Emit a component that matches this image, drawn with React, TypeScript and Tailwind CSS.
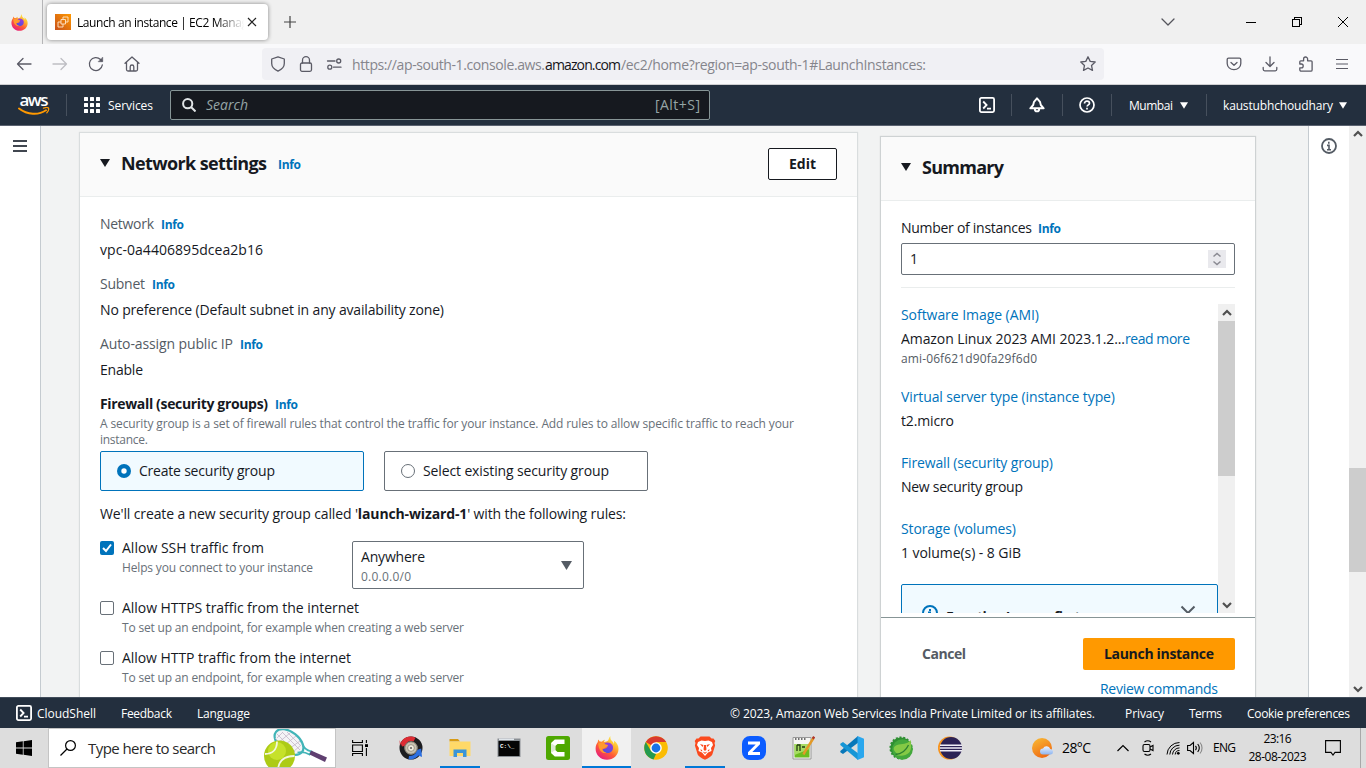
import React, { useLayoutEffect, useRef, useState } from "react";

/* Text run that tracks its letters so that it fills a given width. */
function Fit({ w, className = "", children }: { w: number; className?: string; children: React.ReactNode }) {
  const ref = useRef<HTMLSpanElement>(null);
  const [spacing, setSpacing] = useState(0);
  useLayoutEffect(() => {
    const el = ref.current;
    if (!el) return;
    el.style.letterSpacing = "0px";
    const n = Math.max((el.textContent || "").length - 1, 1);
    setSpacing((w - el.getBoundingClientRect().width) / n);
  }, [w]);
  return (
    <span ref={ref} className={`inline-block shrink-0 whitespace-pre ${className}`} style={{ letterSpacing: `${spacing}px`, marginRight: `${-spacing}px` }}>
      {children}
    </span>
  );
}

const Info = ({ className = "mt-px" }: { className?: string }) => (
  <Fit w={23} className={`text-[12px] font-bold text-[#0073bb] ${className}`}>Info</Fit>
);

const Tri = ({ className = "" }: { className?: string }) => (
  <svg viewBox="0 0 10 8" className={`shrink-0 ${className}`} fill="currentColor"><path d="M0 0h10L5 8z" /></svg>
);

const line = { fill: "none", stroke: "currentColor", strokeWidth: 1.3, strokeLinecap: "round" as const, strokeLinejoin: "round" as const };

function Firefox({ className = "" }: { className?: string }) {
  return (
    <svg viewBox="0 0 24 24" className={className}>
      <defs>
        <linearGradient id="fxBody" x1="0.85" y1="0.05" x2="0.2" y2="1">
          <stop offset="0" stopColor="#fff44f" /><stop offset="0.3" stopColor="#ffb52e" /><stop offset="0.6" stopColor="#ff5a36" /><stop offset="1" stopColor="#e31587" />
        </linearGradient>
        <linearGradient id="fxGlobe" x1="0.7" y1="0" x2="0.3" y2="1">
          <stop offset="0" stopColor="#a138d8" /><stop offset="1" stopColor="#4a52e0" />
        </linearGradient>
      </defs>
      <path fill="url(#fxBody)" d="M15.5.3c-.6 2.4.4 3.6 1.700 5 1.200 1.200 1.500 1.800 1.600 2.900.500-1 .4-2.700 0-3.600 3.300 2.300 4.700 5.200 4.700 8.500C23.500 19.300 18.400 23.800 12 23.800S.6 18.800.6 12.700c0-2.800.8-4.900 2.200-6.800l.3-2.300c.7.7 1.300 1.200 1.700 2 .7-.1 1.500 0 2.100.2C7.600 4.800 8.900 3.900 10 3.800c-.7.8-1 1.500-1.100 2.300 2-.4 3.200-.7 4.300-1.600C13.900 3 14 1.300 15.500.3z" />
      <path fill="url(#fxGlobe)" d="M9.300 7.300c3-1.700 6.900-.7 8.200 2 1.500 3-.1 7.500-4.300 7.700-3.500.2-5.700-2.200-5.400-4.600 1 .6 2 .4 3-.2.600-.4 1.400-.7 1.900-1.400-1.100-.4-2.100.1-2.700-.3-.600-.4-.3-1.500.700-2.300z" />
      <path fill="#ff9a2e" d="M3.200 7.500c1.700-1 3.500-1 5.700-.7-.4 1 .1 1.500 1.600 1.700 1 .1 2.300.1 2.500.9-.2 1-1.800 1.300-2.800 2.100-1 .7-1.300 1.500-3 1.300.3 2.200 2.300 3.800 4.500 4-4.200 1.300-8-1.800-8.500-9.300z" />
    </svg>
  );
}

const Shell = ({ className = "" }: { className?: string }) => (
  <svg viewBox="0 0 16 16" className={`shrink-0 ${className}`} fill="none" stroke="white" strokeWidth="1.800">
    <rect x="0.900" y="0.900" width="14.200" height="14.200" rx="1.500" /><path d="M4.200 4.500 7.600 8l-3.400 3.500M8 11.600h4" />
  </svg>
);

function BrowserTabs() {
  return (
    <div className="flex h-11 w-full shrink-0 items-center bg-[#f0f0f0]">
      <div className="flex h-full w-[43px] shrink-0 items-center border-r border-[#b5b5b7] pl-[11px]"><Firefox className="size-[17px]" /></div>
      <div className="ml-1 flex h-9 w-[221px] shrink-0 items-center rounded bg-white shadow-[0_0_4px_rgba(0,0,0,0.45)]">
        <svg viewBox="0 0 16 16" className="ml-2 size-4 shrink-0">
          <defs><linearGradient id="ec2" x1="0" y1="1" x2="1" y2="0"><stop stopColor="#c8511b" /><stop offset="1" stopColor="#f90" /></linearGradient></defs>
          <rect width="16" height="16" fill="url(#ec2)" />
          <path d="M6 5.500h4.500V10H6zM8 5.500V3h5v5h-2.500M6 8H3v5h5v-3" fill="none" stroke="#ffe8cc" strokeWidth="0.900" />
        </svg>
        <div className="ml-1.5 w-[169px] overflow-hidden bg-linear-to-r from-black from-82% to-transparent to-99% bg-clip-text pt-0.5 text-[12px] leading-5 text-transparent">
          <Fit w={171}>Launch an instance | EC2 Manag</Fit>
        </div>
        <svg viewBox="0 0 10 10" className="ml-[1px] size-[10px]" stroke="#222" strokeWidth="1.200"><path d="m1 1 8 8M9 1 1 9" /></svg>
      </div>
      <svg viewBox="0 0 12 12" className="ml-4 size-3" stroke="#444" strokeWidth="1.200"><path d="M0 6h12M6 0v12" /></svg>
      <div className="ml-auto flex items-center text-black">
        <svg viewBox="0 0 14 8" className="mr-[71px] h-2 w-[14px]" {...line} stroke="#55555c"><path d="m1 1 6 6 6-6" /></svg>
        <div className="mr-9 h-px w-[10px] bg-black" />
        <svg viewBox="0 0 10 10" className="mr-9 size-[10px]" fill="none" stroke="black" shapeRendering="crispEdges"><path d="M.5 2.500h7v7h-7zM2.500 2.500v-2h7v7h-2" /></svg>
        <svg viewBox="0 0 10 10" className="mr-[18px] size-[10px]" stroke="black" strokeWidth="1"><path d="m0 0 10 10M10 0 0 10" /></svg>
      </div>
    </div>
  );
}

function Toolbar() {
  return (
    <div className="flex h-[41px] w-full shrink-0 items-center border-b border-[#cfcfd1] bg-[#f9f9fb] text-[#5b5b66]">
      <svg viewBox="0 0 16 16" className="ml-4 size-4" {...line}><path d="M15 8H1.500M7 2.500 1.500 8 7 13.500" /></svg>
      <svg viewBox="0 0 16 16" className="ml-5 size-4 text-[#bebec3]" {...line}><path d="M1 8h13.500M9 2.500 14.500 8 9 13.500" /></svg>
      <svg viewBox="0 0 16 16" className="ml-5 size-4" {...line}><path d="M14.300 9A6.500 6.500 0 1 1 12.500 3.500L14 5" /><path d="M14.700 1.500v4.200h-4.200z" fill="currentColor" strokeWidth="0.600" /></svg>
      <svg viewBox="0 0 16 16" className="ml-5 size-4" {...line}><path d="M1 7.300 8 1l7 6.300M2.500 6.200v7.300a1.500 1.500 0 0 0 1.500 1.500h8a1.500 1.500 0 0 0 1.500-1.500V6.200M6.200 15v-4.200a1.800 1.800 0 0 1 3.600 0V15" /></svg>
      <div className="ml-[122px] flex h-8 w-[842px] shrink-0 items-center rounded bg-[#f0f0f4]">
        <svg viewBox="0 0 16 16" className="ml-2 size-4" {...line}><path d="M8 .8 14.300 3v4.500c0 3.200-2.800 6-6.300 7.700-3.500-1.700-6.300-4.500-6.300-7.700V3z" /></svg>
        <svg viewBox="0 0 16 16" className="ml-3 size-4" {...line}><rect x="2.500" y="7" width="11" height="8.300" rx="1.500" /><path d="M4.500 7V4.200a3.500 3.500 0 0 1 7 0V7" /></svg>
        <svg viewBox="0 0 16 16" className="ml-3 size-4" {...line}><circle cx="12.700" cy="5" r="2" /><path d="M1.500 5H9M7.500 11.200H15" /><circle cx="3.800" cy="11.200" r="2" /></svg>
        <div className="ml-[10px] flex pt-0.5 text-[14px] leading-5 text-[#85858c]">
          <Fit w={193}>https://ap-south-1.console.aws.</Fit>
          <Fit w={76} className="text-[#15141a]">amazon.com</Fit>
          <Fit w={305}>/ec2/home?region=ap-south-1#LaunchInstances:</Fit>
        </div>
        <svg viewBox="0 0 16 16" className="mr-2 ml-auto size-4" {...line}><path d="m8 .8 2.200 4.600 5 .6-3.700 3.400 1 5L8 12l-4.500 2.400 1-5L.8 6l5-.6z" /></svg>
      </div>
      <svg viewBox="0 0 16 16" className="ml-[122px] size-4" {...line}><path d="M2.500 2.200h11A1.300 1.300 0 0 1 14.800 3.500V7.500a6.800 6.200 0 0 1-13.600 0v-4A1.300 1.300 0 0 1 2.500 2.200zM5 6.500 8 9.300l3-2.800" /></svg>
      <svg viewBox="0 0 16 16" className="ml-5 size-4" {...line}><path d="M8 .8v9.500M4 6.500l4 4 4-4M1.200 11.500v1.800A1.500 1.500 0 0 0 2.700 14.800h10.600a1.500 1.500 0 0 0 1.500-1.500v-1.800" /></svg>
      <svg viewBox="0 0 16 16" className="ml-5 size-4" {...line}><path d="M3.200 15.200h9.600a1.300 1.300 0 0 0 1.300-1.300V5.800a1 1 0 0 0-1-1H9.600V3a2 2 0 0 0-4 0v1.800H2.800a1 1 0 0 0-1 1V8h1.500a1.900 1.900 0 0 1 0 3.800H1.800v2a1.400 1.400 0 0 0 1.400 1.400z" /></svg>
      <svg viewBox="0 0 12 12" className="ml-[22px] size-3" stroke="currentColor" strokeWidth="1.200"><path d="M0 1.500h12M0 6h12M0 10.500h12" /></svg>
    </div>
  );
}

const Sep = ({ className = "" }: { className?: string }) => <div className={`h-[22px] w-px shrink-0 bg-[#46505d] ${className}`} />;

function AwsHeader() {
  return (
    <div className="flex h-[41px] w-full shrink-0 items-center border-b border-[#5a6270] bg-[#232f3e] text-[12px] font-medium text-white">
      <div className="ml-[18px] flex w-8 shrink-0 flex-col items-center">
        <Fit w={29} className="h-[14px] text-[17px] leading-[10px] font-semibold">aws</Fit>
        <svg viewBox="0 0 32 9" className="-mt-0.5 h-[9px] w-8" fill="none" stroke="#f90" strokeLinecap="round"><path d="M1 1.500c8.500 6.500 19.500 7 27 1.800" strokeWidth="2" /><path d="M25.500 1.200c2-.7 4.500-.9 5 0s-.5 3.200-1.700 4.600" strokeWidth="1.300" /></svg>
      </div>
      <Sep className="ml-4" />
      <svg viewBox="0 0 16 16" className="ml-[17px] size-4 shrink-0" fill="white">
        {[0, 6, 12].flatMap((x) => [0, 6, 12].map((y) => <rect key={`${x}-${y}`} x={x} y={y} width="4" height="4" rx=".5" />))}
      </svg>
      <Fit w={45} className="ml-2 pt-0.5">Services</Fit>
      <div className="ml-[17px] flex h-[30px] w-[540px] shrink-0 items-center rounded-xs border border-[#879596] bg-[#16191f] text-[14px] font-normal text-[#95a5a6]">
        <svg viewBox="0 0 14 14" className="ml-[11px] size-[14px]" fill="none" stroke="#e0e4e6" strokeWidth="2"><circle cx="5.700" cy="5.700" r="4.600" /><path d="m9 9 4.500 4.500" /></svg>
        <Fit w={42} className="ml-[10px] italic">Search</Fit>
        <div className="mr-[9px] ml-auto flex"><Fit w={45}>[Alt+S]</Fit></div>
      </div>
      <Shell className="ml-[269px] size-4" />
      <Sep className="ml-4" />
      <svg viewBox="0 0 16 16" className="ml-[17px] size-4 shrink-0" fill="none" stroke="white" strokeWidth="1.900" strokeLinejoin="round"><path d="M8 1.300 5 4.800 4.200 8 1.300 11.300h13.400L11.800 8 11 4.800zM5.800 12a2.200 2.400 0 0 0 4.400 0" /></svg>
      <Sep className="ml-[17px]" />
      <svg viewBox="0 0 16 16" className="ml-4 size-4 shrink-0" fill="none" stroke="white" strokeWidth="1.700"><circle cx="8" cy="8" r="7" /><path d="M5.500 6.500C5.500 5 6.500 4.200 8 4.200s2.500.9 2.500 2.100c0 1.500-2.400 1.700-2.400 3.200" /><path d="M8 10.800v1.700" /></svg>
      <Sep className="ml-4" />
      <Fit w={44} className="ml-[17px] pt-0.5">Mumbai</Fit>
      <Tri className="ml-[7px] h-[7px] w-2" />
      <Sep className="ml-[18px]" />
      <Fit w={110} className="ml-4 pt-0.5">kaustubhchoudhary</Fit>
      <Tri className="ml-[6px] h-[7px] w-2" />
    </div>
  );
}

const Field = ({ label, w, value, vw }: { label: string; w: number; value: string; vw: number }) => (
  <div className="mb-[14px] flex h-[46px] flex-col justify-between leading-5">
    <div className="flex h-5 items-center gap-[7px]"><Fit w={w} className="text-[#545b64]">{label}</Fit><Info /></div>
    <div className="h-5"><Fit w={vw}>{value}</Fit></div>
  </div>
);

function Rule({ checked, label, w, help, hw }: { checked?: boolean; label: string; w: number; help: string; hw: number }) {
  return (
    <div className="flex h-[50px] gap-2">
      {checked ? (
        <svg viewBox="0 0 14 14" className="mt-[3px] size-[14px] shrink-0"><rect width="14" height="14" rx="2" fill="#0073bb" /><path d="m3 7 3 3 5-6.500" fill="none" stroke="white" strokeWidth="2" /></svg>
      ) : (
        <div className="mt-[3px] size-[14px] shrink-0 rounded-xs border border-[#687078]" />
      )}
      <div className="flex flex-col">
        <div className="h-5 leading-5"><Fit w={w}>{label}</Fit></div>
        <div className="h-5 text-[12px] leading-5 text-[#687078]"><Fit w={hw}>{help}</Fit></div>
      </div>
    </div>
  );
}

function NetworkCard() {
  return (
    <section className="mt-[7px] ml-[39px] h-[565px] w-[777px] shrink-0 bg-white shadow-[0_0_1px_1px_rgba(0,28,36,0.1)]">
      <div className="flex h-16 items-center border-b border-[#eaeded] bg-[#fafafa] pb-[2px]">
        <Tri className="mb-[2px] ml-5 h-2 w-[10px]" />
        <Fit w={146} className="mb-[2px] ml-[11px] text-[18px] leading-6 font-bold">Network settings</Fit>
        <Info className="mt-[2px] ml-[11px]" />
        <button className="mr-5 ml-auto flex h-8 w-[69px] items-center justify-center rounded-xs border border-[#16191f] bg-white font-bold"><Fit w={27}>Edit</Fit></button>
      </div>
      <div className="px-5 pt-[17px]">
        <Field label="Network" w={54} value="vpc-0a4406895dcea2b16" vw={163} />
        <Field label="Subnet" w={45} value="No preference (Default subnet in any availability zone)" vw={344} />
        <Field label="Auto-assign public IP" w={133} value="Enable" vw={43} />
        <div className="flex h-5 items-center gap-[7px] leading-5"><Fit w={168} className="font-bold">Firewall (security groups)</Fit><Info /></div>
        <div className="mt-0.5 flex flex-col text-[12px] leading-4 text-[#687078]">
          <div className="h-4"><Fit w={694}>A security group is a set of firewall rules that control the traffic for your instance. Add rules to allow specific traffic to reach your</Fit></div>
          <div className="h-4"><Fit w={48}>instance.</Fit></div>
        </div>
        <div className="mt-[3px] flex gap-5">
          <div className="flex h-10 w-[264px] items-center rounded-xs border border-[#0073bb] bg-[#f1faff] pl-4">
            <svg viewBox="0 0 14 14" className="mr-2 size-[14px]"><circle cx="7" cy="7" r="7" fill="#0073bb" /><circle cx="7" cy="7" r="2.700" fill="white" /></svg>
            <Fit w={136}>Create security group</Fit>
          </div>
          <div className="flex h-10 w-[264px] items-center rounded-xs border border-[#687078] pl-4">
            <div className="mr-2 size-[14px] rounded-full border border-[#687078] bg-white" /><Fit w={186}>Select existing security group</Fit>
          </div>
        </div>
        <div className="mt-[13px] h-5 leading-5"><Fit w={526}>We'll create a new security group called '<b>launch-wizard-1</b>' with the following rules:</Fit></div>
        <div className="mt-[14px] flex h-[60px]">
          <div className="w-[252px]"><Rule checked label="Allow SSH traffic from" w={142} help="Helps you connect to your instance" hw={191} /></div>
          <div className="mt-[3px] flex h-12 w-[232px] items-center justify-between rounded-xs border border-[#687078] pr-[11px] pl-2">
            <div className="flex flex-col pt-1">
              <div className="h-5 leading-5"><Fit w={64}>Anywhere</Fit></div>
              <div className="h-5 text-[12px] leading-5 text-[#687078]"><Fit w={50}>0.0.0.0/0</Fit></div>
            </div>
            <Tri className="h-[9px] w-[11px] text-[#545b64]" />
          </div>
        </div>
        <Rule label="Allow HTTPS traffic from the internet" w={237} help="To set up an endpoint, for example when creating a web server" hw={342} />
        <Rule label="Allow HTTP traffic from the internet" w={229} help="To set up an endpoint, for example when creating a web server" hw={342} />
      </div>
    </section>
  );
}

const Chevron = ({ up, className = "" }: { up?: boolean; className?: string }) => (
  <svg viewBox="0 0 10 7" className={`h-[7px] w-[10px] ${className}`} fill="none" stroke="#505050" strokeWidth="2.200"><path d={up ? "m1 6 4-4 4 4" : "m1 1 4 4 4-4"} /></svg>
);

function SummaryCard() {
  return (
    <section className="mt-[11px] ml-6 flex h-[561px] w-[374px] shrink-0 flex-col bg-white shadow-[0_0_1px_1px_rgba(0,28,36,0.15)]">
      <div className="flex h-16 shrink-0 items-center border-b border-[#eaeded] bg-[#fafafa] pb-1">
        <Tri className="ml-5 h-2 w-[10px]" />
        <Fit w={82} className="ml-[11px] text-[18px] leading-6 font-bold">Summary</Fit>
      </div>
      <div className="mt-[17px] ml-5 flex h-5 shrink-0 items-center leading-5"><Fit w={131}>Number of instances</Fit><Info className="mt-px ml-[6px]" /></div>
      <div className="mt-[5px] ml-5 flex h-8 w-[334px] shrink-0 items-center justify-between rounded-xs border border-[#687078] pr-2 pl-2">
        <span>1</span>
        <svg viewBox="0 0 18 18" className="size-[18px]" fill="none" stroke="#8a8a92" strokeWidth="1.500"><rect width="18" height="18" fill="#e9e9ed" stroke="none" /><path d="m5.500 6.500 3.500-3 3.500 3M5.500 11.500l3.500 3 3.500-3" /></svg>
      </div>
      <div className="mt-3 ml-5 h-px w-[334px] shrink-0 bg-[#eaeded]" />
      <div className="mt-4 ml-5 flex h-[309px] w-[334px] shrink-0">
        <div className="flex w-[317px] flex-col overflow-hidden leading-6">
          <div className="-mt-px h-6 shrink-0 text-[#0073bb]"><Fit w={138}>Software Image (AMI)</Fit></div>
          <div className="h-6 shrink-0"><Fit w={224}>Amazon Linux 2023 AMI 2023.1.2...</Fit><Fit w={65} className="text-[#0073bb]">read more</Fit></div>
          <div className="h-[18px] shrink-0 text-[12px] leading-4 text-[#545b64]"><Fit w={136}>ami-06f621d90fa29f6d0</Fit></div>
          <div className="mt-4 h-6 shrink-0 text-[#0073bb]"><Fit w={214}>Virtual server type (instance type)</Fit></div>
          <div className="h-6 shrink-0"><Fit w={53}>t2.micro</Fit></div>
          <div className="mt-[18px] h-6 shrink-0 text-[#0073bb]"><Fit w={152}>Firewall (security group)</Fit></div>
          <div className="h-6 shrink-0"><Fit w={122}>New security group</Fit></div>
          <div className="mt-[18px] h-6 shrink-0 text-[#0073bb]"><Fit w={115}>Storage (volumes)</Fit></div>
          <div className="h-6 shrink-0"><Fit w={120}>1 volume(s) - 8 GiB</Fit></div>
          <div className="mt-[19px] flex h-20 w-full shrink-0 rounded-xs border border-[#0073bb] bg-[#f1faff] pt-5 pl-5">
            <svg viewBox="0 0 16 16" className="size-4 shrink-0" fill="none" stroke="#0073bb" strokeWidth="2"><circle cx="8" cy="8" r="7" /><path d="M8 4v2M6 7.500h2V12M6 12h4" /></svg>
            <Fit w={166} className="ml-2 font-bold">Free tier: In your first year</Fit>
            <svg viewBox="0 0 16 16" className="mr-[21px] ml-auto size-4 shrink-0" fill="none" stroke="#545b64" strokeWidth="2"><path d="m1.500 1.500 13 13M14.500 1.500l-13 13" /></svg>
          </div>
        </div>
        <div className="flex w-[17px] flex-col items-center bg-[#f0f0f0]">
          <Chevron up className="mt-[5px] mb-[5px] shrink-0" />
          <div className="h-[155px] w-full bg-[#cdcdcd]" />
          <Chevron className="mt-auto mb-[4px]" />
        </div>
      </div>
      <div className="mt-1 flex h-[80px] w-full shrink-0 flex-col border-t border-[#879596] px-5 pt-5">
        <div className="flex h-8 items-center justify-between font-bold">
          <Fit w={44} className="ml-[21px] text-[#545b64]">Cancel</Fit>
          <button className="flex h-8 w-[152px] items-center justify-center rounded-xs bg-[#ff9900] font-bold"><Fit w={110}>Launch instance</Fit></button>
        </div>
        <div className="mt-[9px] mr-[17px] flex h-5 self-end leading-5 text-[#0073bb]"><Fit w={118}>Review commands</Fit></div>
      </div>
    </section>
  );
}

function Footer() {
  return (
    <div className="flex h-[31px] w-full shrink-0 items-center border-t border-[#414c5a] bg-[#232f3e] text-[12px] font-medium text-white">
      <Shell className="ml-4 size-4" />
      <Fit w={59} className="ml-[5px] pt-px">CloudShell</Fit>
      <Fit w={51} className="ml-[25px] pt-px">Feedback</Fit>
      <Fit w={53} className="ml-[25px] pt-px">Language</Fit>
      <div className="mr-4 ml-auto flex pt-px">
        <Fit w={365}>© 2023, Amazon Web Services India Private Limited or its affiliates.</Fit>
        <Fit w={39} className="ml-[30px]">Privacy</Fit>
        <Fit w={33} className="ml-[25px]">Terms</Fit>
        <Fit w={103} className="ml-[25px]">Cookie preferences</Fit>
      </div>
    </div>
  );
}

const App24 = ({ children }: { children: React.ReactNode }) => <svg viewBox="0 0 24 24" className="size-6">{children}</svg>;

const apps: { on?: boolean; active?: boolean; icon: React.ReactNode }[] = [
  { icon: <App24><circle cx="12" cy="12" r="9" fill="none" stroke="#1d1d1f" strokeWidth="5" /><path d="M1 10C2 4 6 .8 11 .5c2.500 0 4 .5 5.500 1.300L14.500 5.500C11 4.300 8.500 5.500 7.500 7.500L9.500 9 3 10.500.5 4z" fill="#dd2c33" /><path d="M9.500 23.300c3 .5 7-.2 10-3.800l3.500 1.500-.8-8.500-7 2.500 2 1.500c-1.500 2.500-4 3.500-7.200 3.500z" fill="#2c6fe0" /><circle cx="12" cy="12" r="6.300" fill="#c9c3b2" stroke="#6c685f" /><circle cx="12" cy="12" r="3.400" fill="#efebdd" stroke="#9b9587" /><circle cx="12" cy="12" r="1.100" fill="#666" /></App24> },
  { on: true, icon: <App24><path d="M1.500 3h8.500l2 2.500H1.500z" fill="#d79b15" /><path d="M1.500 5.500h21V20h-21z" fill="#ffd968" /><path d="M5.500 21v-7.500h13V21h-3.500v-4h-6v4z" fill="#3a95d8" /></App24> },
  { icon: <App24><path d="M.5 2.500h23v18.500H.5z" fill="#8a8f94" /><path d="M1.500 5h21v15h-21z" fill="#050505" /><path d="M2 3.300h15" stroke="#dfe5ea" strokeWidth="1.500" /><text x="3" y="11.500" fontSize="6" fontWeight="700" fill="white" fontFamily="Liberation Mono, monospace">C:\_</text></App24> },
  { icon: <App24><rect width="24" height="24" rx="2.500" fill="#4ea800" /><path d="M18.500 3.500V8h-7L9.300 10v4l2.200 2h7v4.500H8.800L5 17V7l3.800-3.500z" fill="white" /><path d="M9.300 10 5 7v10l4.300-3z" fill="#dce8d3" /></App24> },
  { on: true, active: true, icon: <Firefox className="size-6" /> },
  { icon: <App24><circle cx="12" cy="12" r="11.800" fill="#fbbc04" /><path d="M12 12 1.800 6.100A11.800 11.800 0 0 1 22.200 6.100H12z" fill="#d93a2f" /><path d="M1.800 6.100 7 15l5 3-2.500 5.500A11.800 11.800 0 0 1 1.800 6.100z" fill="#249a50" /><circle cx="12" cy="12" r="5.800" fill="white" /><circle cx="12" cy="12" r="4.400" fill="#1a73e8" /></App24> },
  { on: true, icon: <App24><path d="M7.500.5h9l2 2h2L22.300 5l-.8 2 .6 2.500-2.700 8.700c-.5 1.600-4.600 4.500-7.400 5.500-2.800-1-6.900-3.900-7.400-5.500L1.900 9.500 2.500 7l-.8-2L3.500 2.500h2z" fill="#fb4a1e" /><path d="m5 6 3.500-1.500L12 5l3.500-.5L19 6l1 3-2 3 .5 3-3.500 1.500-3 3.500-3-3.500L5.500 15l.5-3-2-3z" fill="white" /><path d="m7 8 3.500 1L9.500 11zM17 8l-3.500 1 1 2zM11 9h2l.500 4.500L12 15l-1.500-1.500zM7.500 13l2 1.500L8 15.500zM16.500 13l-2 1.500 1.500 1zM12 16.500l2.500-1L12 18l-2.500-2.500z" fill="#fb4a1e" /></App24> },
  { icon: <App24><rect width="24" height="24" rx="8" fill="#0b5cff" /><path d="M6 5.500h12v2.800L10.300 16H18v3H6v-2.800l7.700-7.700H6z" fill="white" /></App24> },
  { icon: <App24><path d="M2 1.500h18V23H2z" fill="#f7f7f5" stroke="#999" /><path d="M3.500 8h15v13.500h-15z" fill="#6bbd20" /><path d="M3.500 8h15v5l-15 6z" fill="#a7dc63" /><path d="M4 3h1.500M7 3h1.500M10 3h1.500M13 3h1.500" stroke="#444" strokeWidth="1.500" /><path d="M6 9v6M6 9h3v6M11 11h3" stroke="#223d12" strokeWidth="1.300" fill="none" /><path d="M22.500 2 14 15.500l-1.500 3" stroke="#e39a28" strokeWidth="2.500" fill="none" /><path d="m21.500 1 2 1.500" stroke="#b0382a" strokeWidth="2.500" /></App24> },
  { icon: <App24><path d="M18 0v6.700L3 18 .3 16.300v-1.400z" fill="#0877b9" /><path d="M.3 9.100V7.700L3 6l15 11.300V24z" fill="#1696d6" /><path d="M17.500 0 24 2.800v18.400L17.500 24z" fill="#2aa7ee" /></App24> },
  { icon: <App24><circle cx="12" cy="12" r="10.600" fill="#2f8f32" stroke="#2f8f32" strokeWidth="2" strokeDasharray="2 1.700" /><circle cx="13.500" cy="13.500" r="10.300" fill="#43a83c" /><path d="M21.500 4c1 5.500 1 10-1.500 12.800-3.500 3.700-9.500 3-13.500 2.200 1.500-.4 2-1 2-1C3 14 4 10.500 8 9c5-1.800 10 .1 13.500-5z" fill="#84c945" /><path d="M6.500 18.500c6-.5 10.500-4 13-9.500" stroke="#2c8130" strokeWidth="1.300" fill="none" /></App24> },
  { icon: <App24><circle cx="11.500" cy="12" r="11.500" fill="#f7941e" /><circle cx="13" cy="12" r="11" fill="#2c2255" /><path d="M2 9.200h22M1.800 12h22.400M2 14.800h22" stroke="#f0edf7" strokeWidth="1.500" /></App24> },
];

function Tennis() {
  return (
    <svg viewBox="0 0 64 38" className="h-[38px] w-16 self-end">
      <ellipse cx="25" cy="13" rx="16.500" ry="10" transform="rotate(38 25 13)" fill="#f4f4f7" stroke="#42b5b8" strokeWidth="2.200" />
      <path d="m13 5 18 18M18 3l18 18M23 3l13 13M11 9l14 14M13 9l6-6M14 14 26 4M17 19 32 7M22 22 36 12M29 23l8-7" stroke="#c3b7c9" strokeWidth=".8" />
      <path d="M38.500 15c1 4 3 6 9 7.500l-2 3c-5-3-8-3-12-2" fill="none" stroke="#42b5b8" strokeWidth="1.800" />
      <path d="m47 21.500 16 7-2 4.500-15.500-7.500z" fill="#5f3f70" />
      <circle cx="15.500" cy="27" r="15.500" fill="#adcb16" /><circle cx="13" cy="22" r="9" fill="#c6e12a" />
      <path d="M1 25c7 0 12-4 12-12.500M14 42c0-10 6-15 16.500-15" stroke="#f3f7df" strokeWidth="1.800" fill="none" />
    </svg>
  );
}

function Taskbar() {
  return (
    <div className="flex h-10 w-full shrink-0 items-center bg-[#dddddd] text-black">
      <svg viewBox="0 0 16 16" className="ml-4 size-4 shrink-0"><path d="M0 2.300 6.800 1.300v6.300H0zM7.600 1.200 16 0v7.600H7.600zM0 8.400h6.800v6.300L0 13.700zM7.600 8.400H16V16l-8.400-1.200z" /></svg>
      <div className="ml-4 flex h-10 w-[288px] shrink-0 items-center border border-[#c4c4c4] bg-white">
        <svg viewBox="0 0 16 16" className="ml-[11px] size-4" fill="none" stroke="black" strokeWidth="1.200"><circle cx="10.500" cy="5.500" r="4.900" /><path d="M7 9 .5 15.500" /></svg>
        <Fit w={128} className="ml-3 text-[15px] text-[#2a2a2a]">Type here to search</Fit>
        <div className="ml-12 flex h-full"><Tennis /></div>
      </div>
      <svg viewBox="0 0 16 16" className="ml-4 size-4 shrink-0" fill="none" stroke="black" strokeWidth="1.100"><path d="M.6 0v2.500h9.800V0M.6 5h9.800v6.500H.6zM.6 16v-2.500h9.800V16M14.400 0v3M14.400 8v8" /><path d="M13 4.200h3V7h-3z" fill="black" stroke="none" /></svg>
      <div className="ml-[18px] flex h-full shrink-0">
        {apps.map((a, i) => (
          <div key={i} className={`flex h-full w-[49px] flex-col items-center ${a.active ? "bg-[#f1f1f1]" : ""}`}>
            <div className="mt-2 h-[30px]">{a.icon}</div>
            {a.on && <div className={a.active ? "h-0.5 w-full bg-[#0078d7]" : "h-0.5 w-10 bg-[#0078d7]"} />}
          </div>
        ))}
      </div>
      <svg viewBox="0 0 22 22" className="ml-[58px] size-[22px] shrink-0">
        <defs><linearGradient id="sun" x1="0" y1="0" x2=".5" y2="1"><stop stopColor="#f9bd36" /><stop offset="1" stopColor="#ef6c14" /></linearGradient><linearGradient id="cloud" x1="0" y1="0" x2="0" y2="1"><stop stopColor="#eaf2ff" /><stop offset="1" stopColor="#8eb5ef" /></linearGradient></defs>
        <circle cx="10" cy="11" r="10" fill="url(#sun)" /><path d="M11 17.500a3 3 0 0 1 0-6 4 4 0 0 1 7.300.5 2.800 2.800 0 0 1 .7 5.500z" fill="url(#cloud)" />
      </svg>
      <Fit w={29} className="ml-2 text-[14px]">28°C</Fit>
      <svg viewBox="0 0 12 8" className="ml-[26px] h-2 w-3 shrink-0" fill="none" stroke="black" strokeWidth="1.200"><path d="m.5 7 5.500-5.500L11.500 7" /></svg>
      <svg viewBox="0 0 12 16" className="ml-[13px] h-4 w-3 shrink-0" fill="none" stroke="black" strokeWidth="1.100"><rect x="1" y="4.500" width="7" height="7" rx="1.500" /><path d="m8 7 3-1.500v5L8 9M2.500 2c2-1.600 4.500-1.600 6.500 0M2.500 14c2 1.600 4.500 1.600 6.500 0" /></svg>
      <svg viewBox="0 0 14 14" className="ml-3 size-[14px] shrink-0" fill="none" stroke="black"><path d="M1 13.500A12.500 12.500 0 0 1 13.500 1.500M3.800 13.500a9.700 9.700 0 0 1 9.700-9.300M6.500 13.500a7 7 0 0 1 7-6.600M9.200 13.500a4.300 4.300 0 0 1 4.300-4" strokeWidth="1" /><circle cx="12.300" cy="12.300" r="1.400" fill="black" stroke="none" /></svg>
      <svg viewBox="0 0 16 14" className="ml-[7px] h-[14px] w-4 shrink-0" fill="none" stroke="black" strokeWidth="1.100"><path d="M.6 4.500H3L6.500 1.500v11L3 9.500H.6zM8.500 4.800c1 1.300 1 3.100 0 4.400M10.700 3c2 2.500 2 5.500 0 8" /><path d="M13 1.500c2.700 3 2.700 8 0 11" stroke="#888" /></svg>
      <Fit w={23} className="ml-[10px] text-[12px]">ENG</Fit>
      <div className="ml-3 flex w-[59px] shrink-0 flex-col items-center text-[12px] leading-[18px]"><Fit w={28}>23:16</Fit><Fit w={58}>28-08-2023</Fit></div>
      <svg viewBox="0 0 16 16" className="ml-[18px] size-4 shrink-0" fill="none" stroke="black" strokeWidth="1.100"><path d="M.6.6h14.800v11.800H10L8 15l-2-2.600H.6z" /></svg>
      <div className="ml-[19px] h-full w-px bg-[#a8a8a8]" />
    </div>
  );
}

export default function App() {
  return (
    <div className="flex h-[768px] w-[1366px] flex-col overflow-hidden font-['Open_Sans','Noto_Sans',sans-serif] text-[14px] leading-5 text-[#16191f]">
      <BrowserTabs />
      <Toolbar />
      <AwsHeader />
      <main className="flex h-[571px] w-full shrink-0 overflow-hidden bg-[#f2f3f3]">
        <div className="flex w-[41px] shrink-0 justify-center border-r border-[#c5cbd0] bg-white pt-[14px]">
          <svg viewBox="0 0 14 12" className="h-3 w-[14px]" stroke="#414750" strokeWidth="2"><path d="M0 1h14M0 6h14M0 11h14" /></svg>
        </div>
        <NetworkCard />
        <SummaryCard />
        <div className="ml-auto flex w-[41px] shrink-0 justify-center border-l border-[#c5cbd0] bg-white pt-3">
          <svg viewBox="0 0 16 16" className="size-4" fill="none" stroke="#545b64" strokeWidth="1.800"><circle cx="8" cy="8" r="7" /><path d="M7.800 3.800v2M6 7.400h2v4M6 11.700h4" strokeWidth="1.600" /></svg>
        </div>
        <div className="flex w-[17px] shrink-0 flex-col items-center bg-[#f0f0f0]">
          <Chevron up className="mt-1 shrink-0" />
          <div className="mt-[331px] h-[104px] w-full shrink-0 bg-[#cdcdcd]" />
          <Chevron className="mt-auto mb-1" />
        </div>
      </main>
      <Footer />
      <Taskbar />
    </div>
  );
}
